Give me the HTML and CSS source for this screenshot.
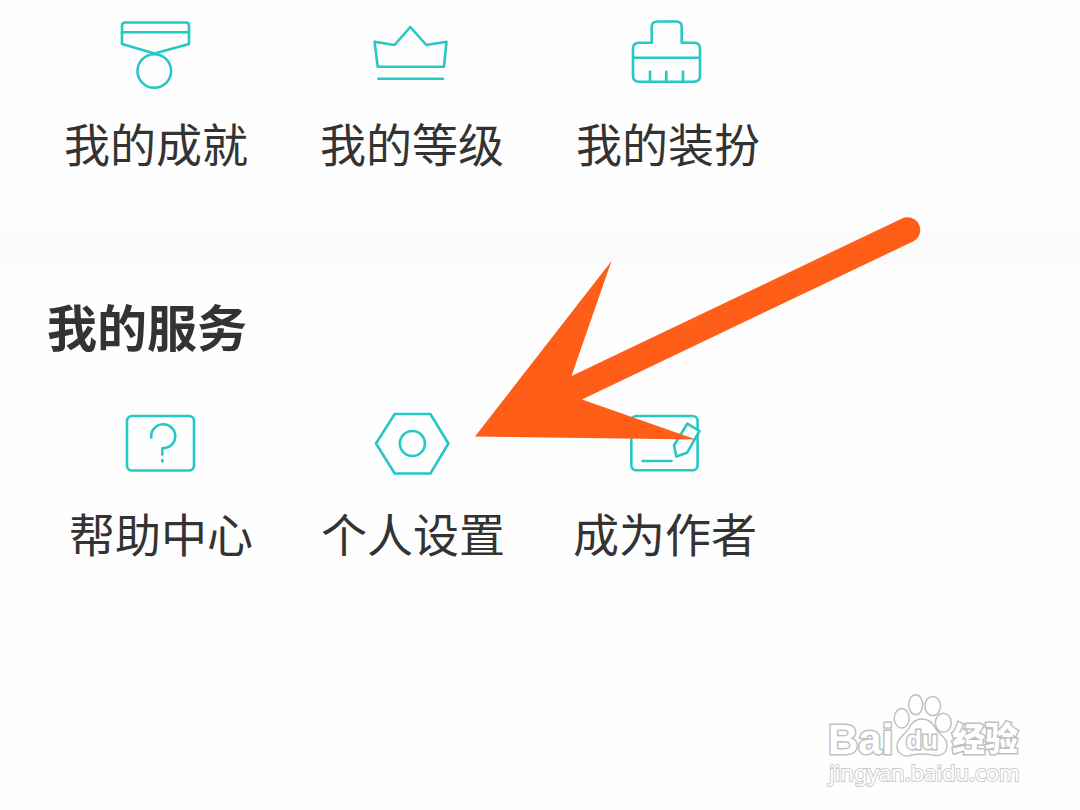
FILE: index.html
```html
<!DOCTYPE html>
<html lang="zh-CN">
<head>
    <meta charset="UTF-8">
    <meta name="viewport" content="width=device-width, initial-scale=1.0">
    <title>我的服务</title>
    <link rel="stylesheet" href="styles.css">
</head>
<body>
    <main class="page">
        <section class="section section-top">
            <nav class="menu">
                <a class="item" href="#achievement">
                    <svg class="icon" viewBox="0 0 88 80" aria-hidden="true">
                        <path d="M13 6.5H74Q77 6.5 77 9.5V28L42.5 37.5L10 28V9.5Q10 6.5 13 6.5Z"/>
                        <path d="M10 16.3H77"/>
                        <circle cx="42.3" cy="55" r="16.8"/>
                    </svg>
                    <span class="label">我的成就</span>
                </a>
                <a class="item" href="#level">
                    <svg class="icon" viewBox="0 0 88 80" aria-hidden="true">
                        <path d="M6.5 25.7L26.5 29L42.3 11L58.3 29L78.5 25.7L76 50.7H9.7Z"/>
                        <path d="M10.5 62.7H75"/>
                    </svg>
                    <span class="label">我的等级</span>
                </a>
                <a class="item" href="#dress">
                    <svg class="icon" viewBox="0 0 88 80" aria-hidden="true">
                        <path d="M27.7 26.7V11Q27.7 5.5 33.5 5.5H52Q57.7 5.5 57.7 11V26.7H70Q76 26.7 76 32.5V60Q76 65.7 70 65.7H15Q9 65.7 9 60V32.5Q9 26.7 15 26.7Z"/>
                        <path d="M9 41.7H76M26 55.7V65M42.3 55.7V65M59 55.7V65"/>
                    </svg>
                    <span class="label">我的装扮</span>
                </a>
            </nav>
        </section>

        <div class="divider"></div>

        <section class="section section-service">
            <h2 class="title">我的服务</h2>
            <nav class="menu">
                <a class="item" href="#help">
                    <svg class="icon" viewBox="0 0 88 80" aria-hidden="true">
                        <rect x="10" y="10" width="67" height="54.5" rx="5"/>
                        <path d="M34.3 31.5A12 12 0 1 1 45.3 42.2V48.5"/>
                        <path class="dot" d="M45.3 53V56.5"/>
                    </svg>
                    <span class="label">帮助中心</span>
                </a>
                <a class="item" href="#settings">
                    <svg class="icon" viewBox="0 0 88 80" aria-hidden="true">
                        <path d="M7 37.5L25.7 8H61.4L79.4 37.5L61.4 67.5H25.7Z"/>
                        <circle cx="43.4" cy="37.5" r="12.5"/>
                    </svg>
                    <span class="label">个人设置</span>
                </a>
                <a class="item" href="#author">
                    <svg class="icon" viewBox="0 0 88 80" aria-hidden="true">
                        <rect x="10.3" y="10" width="66.3" height="54.3" rx="5"/>
                        <path d="M21.7 55H50.5"/>
                        <path class="pencil" d="M66.3 17.7L78.5 25L66 46.8L55.3 50.5L53 39.5Z"/>
                    </svg>
                    <span class="label">成为作者</span>
                </a>
            </nav>
        </section>

        <!-- Arrow pointing at the settings entry -->
        <svg class="arrow" viewBox="0 0 446 224" aria-hidden="true">
            <path d="M0 219.5L136.5 44L96.5 159L427 1.5A12.5 12.5 0 0 1 438 24.5L107 182.5L221 222.5Z"/>
        </svg>

        <!-- Watermark -->
        <svg class="watermark" viewBox="0 0 204 96" role="img" aria-label="Baidu 经验">
            <text class="brand" x="4" y="62">Bai</text>
            <ellipse cx="77.7" cy="26.3" rx="7.5" ry="9.7"/>
            <ellipse cx="91.7" cy="12.7" rx="7" ry="10"/>
            <ellipse cx="108.7" cy="14" rx="7.8" ry="9.5"/>
            <ellipse cx="119.3" cy="30.7" rx="8" ry="9.5"/>
            <path d="M98 27C105 27 109 31 112 37C115 43 123 45 123 53C123 61 117 65 109 63Q98 61 88 63C79 66 73 61 73 54C73 46 81 43 85 36C88 30 92 27 98 27Z"/>
            <text class="paw" x="82" y="57">du</text>
            <text class="cn" x="128" y="59">经验</text>
            <text class="url" x="5" y="89">jingyan.baidu.com</text>
        </svg>
    </main>
</body>
</html>
```

FILE: styles.css
```css
* {
    box-sizing: border-box;
}
body {
    margin: 0;
    background: #fefefe;
    color: #333;
    font-family: "Noto Sans CJK SC", sans-serif;
}
.page {
    position: relative;
    min-height: 100vh;
    overflow: hidden;
}
.section-top {
    padding: 16px 28px 60px;
}
.section-service {
    padding: 31px 37px 48px 35px;
}
.divider {
    height: 32px;
    background: #fafafa;
}
.title {
    margin: 0 0 51px;
    padding-left: 12px;
    font-size: 50px;
    line-height: 60px;
    font-weight: 700;
}
.menu {
    display: grid;
    grid-template-columns: repeat(4, 1fr);
}
.item {
    display: flex;
    flex-direction: column;
    align-items: center;
    gap: 16px;
    color: inherit;
    text-decoration: none;
}
.icon {
    width: 88px;
    height: 80px;
    fill: none;
    stroke: #25c8c4;
    stroke-width: 2.6;
    stroke-linecap: round;
    stroke-linejoin: round;
}
.icon .pencil {
    fill: #fefefe;
}
.icon .dot {
    stroke-linecap: butt;
}
.label {
    font-size: 46px;
    line-height: 60px;
    white-space: nowrap;
}
.arrow {
    position: absolute;
    top: 217px;
    left: 475px;
    width: 446px;
    height: 224px;
    fill: #ff5e18;
}
.watermark {
    position: absolute;
    right: 52px;
    bottom: 22px;
    width: 204px;
    height: 96px;
    fill: #fff;
    stroke: #c0c0c0;
    stroke-width: 1.5;
}
.watermark text {
    paint-order: stroke;
    stroke-width: 3;
}
.brand {
    font: 700 42px "Liberation Sans", sans-serif;
}
.paw {
    font: 700 26px "Liberation Sans", sans-serif;
}
.cn {
    font: 900 33px "Noto Sans CJK SC", sans-serif;
}
.watermark .url {
    font: 400 22px "Noto Sans", sans-serif;
    stroke: #ccc;
    stroke-width: 2;
}
```
